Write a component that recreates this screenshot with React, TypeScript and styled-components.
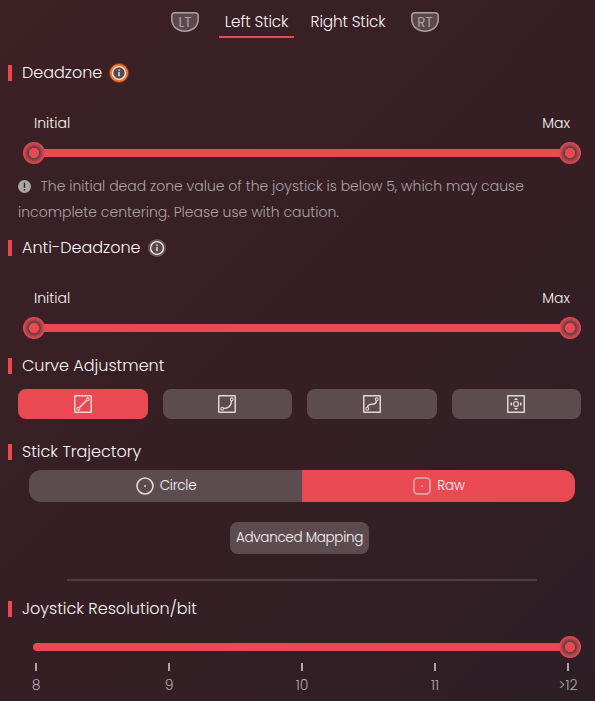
import React from "react";
import styled, { createGlobalStyle } from "styled-components";

const RED = "#e94a52";

const GlobalStyle = createGlobalStyle`
  *, *::before, *::after { box-sizing: border-box; }
  body {
    margin: 0;
    background: #351f24;
    font-family: Poppins, Inter, "Liberation Sans", sans-serif;
    font-weight: 300;
    color: #f8f5f6;
  }
  button { font: inherit; color: inherit; border: 0; padding: 0; }
`;

const Panel = styled.main`
  display: flex;
  flex-direction: column;
  width: 595px;
  height: 701px;
  overflow: hidden;
  background: linear-gradient(135deg, #3c2125 0%, #351f24 55%, #2d1e25 100%);
`;

const Text = styled.span`
  white-space: nowrap;
`;

const TabBar = styled.nav`
  display: flex;
  height: 61px;
  padding: 6px 0 0 171px;
`;

const Trigger = styled.svg`
  width: 28px;
  height: 20px;
  margin-top: 6px;
  font-size: 13.5px;
  font-weight: 400;
`;

const Tab = styled.button<{ $active?: boolean }>`
  display: flex;
  justify-content: center;
  width: ${(p) => (p.$active ? 75 : 76)}px;
  height: 32px;
  margin-left: ${(p) => (p.$active ? 20 : 16)}px;
  margin-right: ${(p) => (p.$active ? 0 : 25)}px;
  background: none;
  border-bottom: 2px solid ${(p) => (p.$active ? RED : "transparent")};
  font-size: 15.3px;
  letter-spacing: -0.15px;
  line-height: 31px;
`;

const Heading = styled.h2<{ $top?: number }>`
  display: flex;
  align-items: center;
  height: 24px;
  margin: ${(p) => p.$top ?? 0}px 0 0 8px;
  font-size: 16px;
  font-weight: 300;
  line-height: 24px;
  &::before {
    content: "";
    width: 4px;
    height: 16px;
    margin-right: 10px;
    background: ${RED};
  }
`;

const InfoBadge = styled.svg`
  width: 22px;
  height: 22px;
  margin-left: 6px;
`;

const RangeLabels = styled.div`
  display: flex;
  justify-content: space-between;
  margin: 26px 25px 7px 34px;
  font-size: 14px;
  line-height: 24px;
`;

const Track = styled.div<{ $single?: boolean }>`
  display: flex;
  align-items: center;
  justify-content: ${(p) => (p.$single ? "flex-end" : "space-between")};
  flex-shrink: 0;
  height: 22px;
  margin: ${(p) => (p.$single ? "15px 14px 0 33px" : "0 14px 0 23px")};
  background: linear-gradient(${RED}, ${RED}) center / ${(p) => (p.$single ? "100%" : "calc(100% - 20px)")} 8px no-repeat;
  ${(p) => p.$single && `
    background: none;
    &::before {
      content: "";
      flex: 1;
      height: 8px;
      margin-right: -4px;
      border-radius: 4px 0 0 4px;
      background: ${RED};
    }
  `}
`;

const Thumb = styled.span`
  position: relative;
  width: 22px;
  height: 22px;
  border-radius: 50%;
  background: radial-gradient(circle, ${RED} 0 4.7px, #70383e 5.4px, #79404a 6.5px, #b7444d 8.5px, #df4951 10.5px);
`;

const Notice = styled.p`
  margin: 9px 18px 0;
  font-size: 14px;
  line-height: 26px;
  color: #aaa4a6;
`;

const NoticeLine = styled.span`
  display: flex;
  align-items: center;
  height: 26px;
`;

const NoticeIcon = styled.svg`
  width: 13px;
  height: 13px;
  margin-right: 9.5px;
`;

const CurveOptions = styled.div`
  display: grid;
  grid-template-columns: repeat(4, 1fr);
  gap: 15px;
  margin: 11px 14px 0 18px;
`;

const CurveButton = styled.button<{ $active?: boolean }>`
  display: flex;
  align-items: center;
  justify-content: center;
  height: 30px;
  border-radius: 8px;
  background: ${(p) => (p.$active ? RED : "#5c4c50")};
  svg { width: 18px; height: 18px; }
`;

const Segments = styled.div`
  display: flex;
  flex-shrink: 0;
  width: 546px;
  height: 32px;
  margin: 6px 0 0 29px;
  border-radius: 12px;
  overflow: hidden;
`;

const Segment = styled.button<{ $active?: boolean }>`
  display: flex;
  flex: 1 1 0;
  align-items: center;
  justify-content: center;
  gap: 6px;
  padding-left: 1px;
  background: ${(p) => (p.$active ? RED : "#5c4c50")};
  font-size: 13.5px;
  letter-spacing: -0.25px;
  svg { width: 18px; height: 18px; }
`;

const MappingButton = styled.button`
  flex-shrink: 0;
  width: 139px;
  height: 32px;
  margin: 20px 0 0 230px;
  border-radius: 8px;
  background: #5c4c50;
  font-size: 13.5px;
  letter-spacing: -0.3px;
`;

const Divider = styled.hr`
  width: 470px;
  height: 2px;
  margin: 25px 0 0 67px;
  border: 0;
  background: #4c3d42;
`;

const Scale = styled.div`
  display: flex;
  justify-content: space-between;
  margin: 5px 26px 0 35px;
  color: #b0abad;
`;

const Mark = styled.div`
  display: flex;
  flex-direction: column;
  align-items: center;
  width: 2px;
  font-size: 14px;
  line-height: 28px;
  &::before {
    content: "";
    width: 2px;
    height: 8px;
    background: #aaa6a8;
  }
`;

const TriggerKey = ({ label }: { label: string }) => (
  <Trigger viewBox="0 0 28 20">
    <path d="M4 .8H24Q27.2 .8 27.2 4V7C27.2 14.5 21.5 19.2 14 19.2S.8 14.5 .8 7V4Q.8 .8 4 .8Z" fill="#5c474c" stroke="#aaa1a3" strokeWidth="1.5" />
    <text x="14" y="14.8" textAnchor="middle" fill="#aaa1a3">{label}</text>
  </Trigger>
);

const Info = ({ highlighted = false }: { highlighted?: boolean }) => (
  <InfoBadge viewBox="0 0 22 22">
    {highlighted && <circle cx="11" cy="11" r="10" fill="#f26f2e" opacity=".4" />}
    <circle cx="11" cy="11" r="9" fill={highlighted ? "#fa752c" : "#67555a"} />
    <circle cx="11" cy="11" r="6.4" fill="#5c474c" stroke="#eee8e9" strokeWidth="1.4" />
    <path d="M11 10v4.2M11 7.6v1.4" fill="none" stroke="#ded6d8" strokeWidth="1.6" />
  </InfoBadge>
);

const CurveIcon = ({ kind }: { kind: "linear" | "arc" | "wave" | "pad" }) => (
  <svg viewBox="0 0 18 18" fill="none" stroke="#dfd7d9" strokeWidth="1.1">
    <rect x=".75" y=".75" width="16.5" height="16.5" rx=".6" strokeWidth="1.5" />
    {kind === "linear" && <><circle cx="4.3" cy="13.7" r="1.4" /><circle cx="13.7" cy="4.3" r="1.4" /><path d="m5.5 12.5 7-7" strokeWidth="1.5" /></>}
    {kind === "arc" && <><circle cx="4.3" cy="13.7" r="1.4" /><circle cx="13.7" cy="4.3" r="1.4" /><path d="M5.8 13.6C11 13.2 13.4 11 13.6 5.8" strokeWidth="1.5" /></>}
    {kind === "wave" && <><circle cx="4.3" cy="13.7" r="1.4" /><circle cx="13.7" cy="4.3" r="1.4" /><path d="M4.5 12.2C5 9.4 6.5 9.2 9 9.2s4.2-.5 4.5-3.4" strokeWidth="1.5" /></>}
    {kind === "pad" && <><circle cx="9" cy="9" r="2.5" strokeWidth="1.2" /><path d="m9 2.8 2 2.2H7zM9 15.2l2-2.2H7zM2.8 9l2.2-2v4zM15.2 9l-2.2-2v4z" fill="#dfd7d9" stroke="none" /></>}
  </svg>
);

const RangeSlider = () => (
  <>
    <RangeLabels><Text>Initial</Text><Text>Max</Text></RangeLabels>
    <Track><Thumb /><Thumb /></Track>
  </>
);

export default function App() {
  return (
    <>
      <GlobalStyle />
      <Panel>
        <TabBar>
          <TriggerKey label="LT" />
          <Tab $active><Text>Left Stick</Text></Tab>
          <Tab><Text>Right Stick</Text></Tab>
          <TriggerKey label="RT" />
        </TabBar>
        <Heading><Text>Deadzone</Text><Info highlighted /></Heading>
        <RangeSlider />
        <Notice>
          <NoticeLine>
            <NoticeIcon viewBox="0 0 13 13">
              <circle cx="6.5" cy="6.5" r="6.5" fill="#aaa6a7" />
              <path d="M6.5 2.7v5M6.5 9v1.4" stroke="#382126" strokeWidth="1.5" />
            </NoticeIcon>
            <Text>The initial dead zone value of the joystick is below 5, which may cause</Text>
          </NoticeLine>
          <NoticeLine><Text>incomplete centering. Please use with caution.</Text></NoticeLine>
        </Notice>
        <Heading $top={11}><Text>Anti-Deadzone</Text><Info /></Heading>
        <RangeSlider />
        <Heading $top={15}><Text>Curve Adjustment</Text></Heading>
        <CurveOptions>
          <CurveButton $active aria-label="Linear"><CurveIcon kind="linear" /></CurveButton>
          <CurveButton aria-label="Arc"><CurveIcon kind="arc" /></CurveButton>
          <CurveButton aria-label="Wave"><CurveIcon kind="wave" /></CurveButton>
          <CurveButton aria-label="Custom"><CurveIcon kind="pad" /></CurveButton>
        </CurveOptions>
        <Heading $top={21}><Text>Stick Trajectory</Text></Heading>
        <Segments>
          <Segment>
            <svg viewBox="0 0 18 18" fill="none" stroke="#dfd7d9"><circle cx="9" cy="9" r="8" strokeWidth="1.6" /><circle cx="9" cy="9" r="1" fill="#dfd7d9" stroke="none" /></svg>
            <Text>Circle</Text>
          </Segment>
          <Segment $active>
            <svg viewBox="0 0 18 18" fill="none" stroke="#dfaeb2"><rect x="1" y="1" width="16" height="16" rx="3.5" strokeWidth="1.5" /><circle cx="9" cy="9" r="1" fill="#dfaeb2" stroke="none" /></svg>
            <Text>Raw</Text>
          </Segment>
        </Segments>
        <MappingButton><Text>Advanced Mapping</Text></MappingButton>
        <Divider />
        <Heading $top={16}><Text>Joystick Resolution/bit</Text></Heading>
        <Track $single><Thumb /></Track>
        <Scale>
          {["8", "9", "10", "11", ">12"].map((v) => <Mark key={v}><Text>{v}</Text></Mark>)}
        </Scale>
      </Panel>
    </>
  );
}
